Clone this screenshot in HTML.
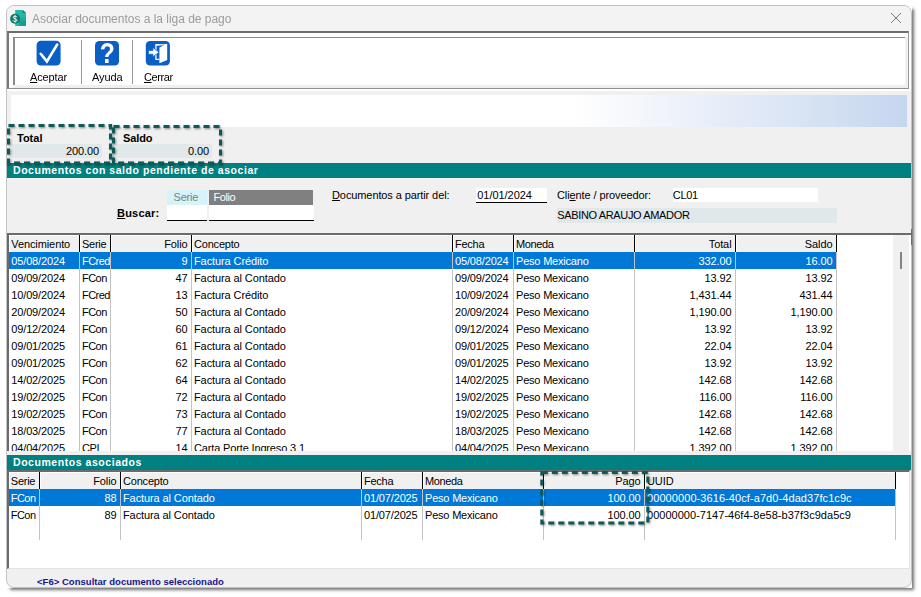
<!DOCTYPE html>
<html>
<head>
<meta charset="utf-8">
<style>
html,body{margin:0;padding:0;background:#fff;}
body{width:921px;height:597px;position:relative;overflow:hidden;font-family:"Liberation Sans",sans-serif;font-size:11px;color:#000;letter-spacing:-0.1px;}
div,span,svg{position:absolute;box-sizing:border-box;}
span{position:static;}
#sh{left:8px;top:7px;width:904px;height:581px;background:#fff;box-shadow:2px 2px 3px 0px rgba(0,0,0,.55);}
#shc{left:6px;top:5px;width:906px;height:583px;background:#fff;}
#win{left:6px;top:5px;width:906px;height:583px;background:#f0f0f0;border-radius:8px;border:1px solid #c2c2c2;}
.t{white-space:nowrap;line-height:14px;height:14px;}
.b{font-weight:bold;}
.c{height:17px;line-height:19px;white-space:nowrap;overflow:hidden;}
.c.r{text-align:right;padding-left:0;padding-right:3.5px;}
.w{color:#fff;}
.vs{width:2px;height:17px;background:#fff;border-left:1px solid #000;}
.hl{height:1px;background:#fff;}
.vl{width:1px;background:#c3c3c3;}
u{text-decoration:underline;text-underline-offset:1px;}
</style>
</head>
<body>
<div id="sh"></div><div id="shc"></div><div id="win"></div>

<div style="left:7px;top:6px;width:904px;height:25px;background:#f3f3f3;border-radius:7px 7px 0 0"></div>
<div class="t" style="left:32px;top:12px;font-size:12px;color:#9b9b9b;letter-spacing:-0.02px;will-change:transform">Asociar documentos a la liga de pago</div>
<svg style="left:10px;top:9px" width="18" height="18" viewBox="0 0 18 18">
<path d="M5.2 1 h7.6 l3.2 3 v12.1 q0 .8 -.8 .8 h-10 z" fill="#2bb5a8"/>
<path d="M12.8 1 l3.2 3 h-3.2 z" fill="#0e7d72"/>
<rect x="9" y="8.2" width="7" height="3.6" fill="#23a99c"/>
<rect x="9" y="11.8" width="7" height="5.1" fill="#1a9d91"/>
<circle cx="5.1" cy="9.8" r="5" fill="#0b7a6e"/>
<path d="M7 8.3 Q6.6 7.1 5.1 7.1 Q3.3 7.1 3.3 8.4 Q3.3 9.4 5.1 9.8 Q7 10.2 7 11.3 Q7 12.6 5.1 12.6 Q3.5 12.6 3.1 11.3" stroke="#fff" stroke-width="1" fill="none"/>
<path d="M5.1 6 V13.7" stroke="#fff" stroke-width=".8"/>
</svg>
<svg style="left:890px;top:12px" width="12" height="12" viewBox="0 0 12 12"><path d="M1 1 L11 11 M11 1 L1 11" stroke="#7a7a7a" stroke-width="1" fill="none"/></svg>
<div style="left:7px;top:31px;width:904px;height:60px;background:#fff"></div>
<div style="left:7px;top:31px;width:902px;height:58px;background:#fdfdfd;border-left:2px solid #787878;border-top:2px solid #6e6e6e;border-right:1px solid #999;border-bottom:1px solid #909090"></div>
<div style="left:905px;top:37px;width:3px;height:51px;background:#efefef"></div>
<div style="left:13px;top:85px;width:895px;height:3px;background:#efefef"></div>
<div style="left:13px;top:37px;width:892px;height:48px;background:#fff;border-left:2px solid #8c8c8c;border-top:1px solid #8c8c8c"></div>
<div style="left:81px;top:40px;width:1px;height:44px;background:#9a9a9a"></div>
<div style="left:132px;top:40px;width:1px;height:44px;background:#9a9a9a"></div>
<svg style="left:0;top:0" width="200" height="90" viewBox="0 0 200 90">
<rect x="36.6" y="40.7" width="24" height="24.9" rx="4.3" fill="#0a5ec4"/>
<path d="M40.7 53.8 L46.9 61.4 L57.2 44.5" stroke="#fff" stroke-width="2.6" fill="none" stroke-linecap="round" stroke-linejoin="miter"/>
<rect x="95" y="40.9" width="24" height="24.7" rx="4.3" fill="#0a5ec4"/>
<text transform="translate(107.3,63.2) scale(0.9,1.05)" x="0" y="0" font-family="Liberation Sans" font-weight="bold" font-size="27.5" fill="#fff" text-anchor="middle" letter-spacing="0">?</text>
<rect x="145.8" y="40.9" width="24.1" height="24.7" rx="4.3" fill="#0a5ec4"/>
<path d="M159.4 44.8 H155.9 V59.3 H159.4" stroke="#fff" stroke-width="1.25" fill="none"/>
<path d="M155.9 44.8 H167" stroke="#fff" stroke-width="1.25" fill="none"/>
<path d="M159.4 47.6 L167.2 43.8 V60 L159.4 63.3 Z" fill="#fff"/>
<path d="M148.4 50.6 H152.9 V47.7 L159.1 52.3 L152.9 56.7 V54.2 H148.4 Z" fill="#fff" stroke="#0a5ec4" stroke-width=".7"/>
</svg>
<div class="t" style="left:30px;top:70px;letter-spacing:-.12px"><u>A</u>ceptar</div>
<div class="t" style="left:92px;top:70px">Ayuda</div>
<div class="t" style="left:144px;top:70px;letter-spacing:-.4px"><u>C</u>errar</div>
<div style="left:10.5px;top:95px;width:896.5px;height:31.6px;background:linear-gradient(to right,#fff 0%,#fff 63%,#c6d6ef 100%)"></div>
<div style="left:10px;top:144px;width:92px;height:14px;background:#e1e8ea"></div>
<div style="left:112px;top:144px;width:100px;height:14px;background:#e1e8ea"></div>
<div class="t b" style="left:17px;top:131px;letter-spacing:0">Total</div>
<div class="t b" style="left:123px;top:131px;letter-spacing:-.1px">Saldo</div>
<div class="t" style="left:10px;width:89px;top:144px;text-align:right">200.00</div>
<div class="t" style="left:112px;width:97px;top:144px;text-align:right">0.00</div>
<div style="left:7px;top:163px;width:904px;height:15px;background:#008080"></div>
<div class="t b w" style="left:13px;top:162.8px;font-size:10.5px;letter-spacing:.55px">Documentos con saldo pendiente de asociar</div>
<div style="left:167px;top:190px;width:40px;height:15px;background:#d5f3f8"></div>
<div class="t" style="left:173.5px;top:189.5px;letter-spacing:-.2px;color:#7f7f7f">Serie</div>
<div style="left:209px;top:190px;width:104px;height:15px;background:#808080"></div>
<div class="t w" style="left:213.5px;top:189.5px;letter-spacing:-.4px">Folio</div>
<div style="left:167px;top:205px;width:40px;height:16px;background:#fff;border-bottom:1px solid #000"></div>
<div style="left:209px;top:205px;width:105px;height:16px;background:#fff;border-bottom:1px solid #000"></div>
<div class="t b" style="left:117px;top:206px;letter-spacing:.2px"><u>B</u>uscar:</div>
<div class="t" style="left:332px;top:187.5px"><u>D</u>ocumentos a partir del:</div>
<div style="left:476px;top:188px;width:71px;height:15px;background:#fff;border-bottom:1px solid #000"></div>
<div class="t" style="left:477.3px;top:187.5px;letter-spacing:-.05px">01/01/2024</div>
<div class="t" style="left:557px;top:187.5px">Cli<u>e</u>nte / proveedor:</div>
<div style="left:673px;top:188px;width:145px;height:14px;background:#fff"></div>
<div class="t" style="left:672.8px;top:187.5px;letter-spacing:-.3px">CL01</div>
<div style="left:557px;top:208px;width:280px;height:15px;background:#e1e8ea"></div>
<div class="t" style="left:557.3px;top:207.5px;letter-spacing:-.36px">SABINO ARAUJO AMADOR</div>
<div style="left:7px;top:233px;width:904px;height:218px;background:#fff;border-left:2px solid #6b6b6b;border-top:2px solid #6b6b6b"></div>
<div style="left:9px;top:235px;width:828px;height:17px;background:#f0f0f0;border-top:1px solid #fff;border-left:1px solid #fff"></div>
<div style="left:893px;top:235px;width:16px;height:216px;background:#f0f0f0"></div>
<div style="left:911px;top:229px;width:1px;height:16px;background:#2a8a88"></div>
<div style="left:900px;top:252px;width:2px;height:17px;background:#858585"></div>
<div style="left:9px;top:252px;width:827px;height:17px;background:#0078d7"></div>
<div style="left:0;top:235px;width:921px;height:216px;overflow:hidden">
<div class="c" style="left:9px;top:0px;width:70px;padding-left:2.3px;">Vencimiento</div>
<div class="c" style="left:81px;top:0px;width:29px;padding-left:1px;letter-spacing:-0.25px;">Serie</div>
<div class="c r" style="left:112px;top:0px;width:79px;">Folio</div>
<div class="c" style="left:193px;top:0px;width:259px;padding-left:1px;letter-spacing:-0.2px;">Concepto</div>
<div class="c" style="left:454px;top:0px;width:59px;padding-left:1px;letter-spacing:-0.25px;">Fecha</div>
<div class="c" style="left:515px;top:0px;width:119px;padding-left:1px;letter-spacing:-0.4px;">Moneda</div>
<div class="c r" style="left:636px;top:0px;width:99px;">Total</div>
<div class="c r" style="left:737px;top:0px;width:99px;">Saldo</div>
<div class="c" style="left:9px;top:17px;width:70px;color:#fff;padding-left:2.3px;letter-spacing:-0.15px;">05/08/2024</div>
<div class="c" style="left:81px;top:17px;width:29px;color:#fff;padding-left:1px;letter-spacing:-0.55px;">FCred</div>
<div class="c r" style="left:112px;top:17px;width:79px;color:#fff;">9</div>
<div class="c" style="left:193px;top:17px;width:259px;color:#fff;padding-left:1px;">Factura Crédito</div>
<div class="c" style="left:454px;top:17px;width:59px;color:#fff;padding-left:1px;letter-spacing:-0.15px;">05/08/2024</div>
<div class="c" style="left:515px;top:17px;width:119px;color:#fff;padding-left:1px;letter-spacing:-0.2px;">Peso Mexicano</div>
<div class="c r" style="left:636px;top:17px;width:99px;color:#fff;">332.00</div>
<div class="c r" style="left:737px;top:17px;width:99px;color:#fff;">16.00</div>
<div class="c" style="left:9px;top:34px;width:70px;padding-left:2.3px;letter-spacing:-0.15px;">09/09/2024</div>
<div class="c" style="left:81px;top:34px;width:29px;padding-left:1px;letter-spacing:-0.55px;">FCon</div>
<div class="c r" style="left:112px;top:34px;width:79px;">47</div>
<div class="c" style="left:193px;top:34px;width:259px;padding-left:1px;">Factura al Contado</div>
<div class="c" style="left:454px;top:34px;width:59px;padding-left:1px;letter-spacing:-0.15px;">09/09/2024</div>
<div class="c" style="left:515px;top:34px;width:119px;padding-left:1px;letter-spacing:-0.2px;">Peso Mexicano</div>
<div class="c r" style="left:636px;top:34px;width:99px;">13.92</div>
<div class="c r" style="left:737px;top:34px;width:99px;">13.92</div>
<div class="c" style="left:9px;top:51px;width:70px;padding-left:2.3px;letter-spacing:-0.15px;">10/09/2024</div>
<div class="c" style="left:81px;top:51px;width:29px;padding-left:1px;letter-spacing:-0.55px;">FCred</div>
<div class="c r" style="left:112px;top:51px;width:79px;">13</div>
<div class="c" style="left:193px;top:51px;width:259px;padding-left:1px;">Factura Crédito</div>
<div class="c" style="left:454px;top:51px;width:59px;padding-left:1px;letter-spacing:-0.15px;">10/09/2024</div>
<div class="c" style="left:515px;top:51px;width:119px;padding-left:1px;letter-spacing:-0.2px;">Peso Mexicano</div>
<div class="c r" style="left:636px;top:51px;width:99px;">1,431.44</div>
<div class="c r" style="left:737px;top:51px;width:99px;">431.44</div>
<div class="c" style="left:9px;top:68px;width:70px;padding-left:2.3px;letter-spacing:-0.15px;">20/09/2024</div>
<div class="c" style="left:81px;top:68px;width:29px;padding-left:1px;letter-spacing:-0.55px;">FCon</div>
<div class="c r" style="left:112px;top:68px;width:79px;">50</div>
<div class="c" style="left:193px;top:68px;width:259px;padding-left:1px;">Factura al Contado</div>
<div class="c" style="left:454px;top:68px;width:59px;padding-left:1px;letter-spacing:-0.15px;">20/09/2024</div>
<div class="c" style="left:515px;top:68px;width:119px;padding-left:1px;letter-spacing:-0.2px;">Peso Mexicano</div>
<div class="c r" style="left:636px;top:68px;width:99px;">1,190.00</div>
<div class="c r" style="left:737px;top:68px;width:99px;">1,190.00</div>
<div class="c" style="left:9px;top:85px;width:70px;padding-left:2.3px;letter-spacing:-0.15px;">09/12/2024</div>
<div class="c" style="left:81px;top:85px;width:29px;padding-left:1px;letter-spacing:-0.55px;">FCon</div>
<div class="c r" style="left:112px;top:85px;width:79px;">60</div>
<div class="c" style="left:193px;top:85px;width:259px;padding-left:1px;">Factura al Contado</div>
<div class="c" style="left:454px;top:85px;width:59px;padding-left:1px;letter-spacing:-0.15px;">09/12/2024</div>
<div class="c" style="left:515px;top:85px;width:119px;padding-left:1px;letter-spacing:-0.2px;">Peso Mexicano</div>
<div class="c r" style="left:636px;top:85px;width:99px;">13.92</div>
<div class="c r" style="left:737px;top:85px;width:99px;">13.92</div>
<div class="c" style="left:9px;top:102px;width:70px;padding-left:2.3px;letter-spacing:-0.15px;">09/01/2025</div>
<div class="c" style="left:81px;top:102px;width:29px;padding-left:1px;letter-spacing:-0.55px;">FCon</div>
<div class="c r" style="left:112px;top:102px;width:79px;">61</div>
<div class="c" style="left:193px;top:102px;width:259px;padding-left:1px;">Factura al Contado</div>
<div class="c" style="left:454px;top:102px;width:59px;padding-left:1px;letter-spacing:-0.15px;">09/01/2025</div>
<div class="c" style="left:515px;top:102px;width:119px;padding-left:1px;letter-spacing:-0.2px;">Peso Mexicano</div>
<div class="c r" style="left:636px;top:102px;width:99px;">22.04</div>
<div class="c r" style="left:737px;top:102px;width:99px;">22.04</div>
<div class="c" style="left:9px;top:119px;width:70px;padding-left:2.3px;letter-spacing:-0.15px;">09/01/2025</div>
<div class="c" style="left:81px;top:119px;width:29px;padding-left:1px;letter-spacing:-0.55px;">FCon</div>
<div class="c r" style="left:112px;top:119px;width:79px;">62</div>
<div class="c" style="left:193px;top:119px;width:259px;padding-left:1px;">Factura al Contado</div>
<div class="c" style="left:454px;top:119px;width:59px;padding-left:1px;letter-spacing:-0.15px;">09/01/2025</div>
<div class="c" style="left:515px;top:119px;width:119px;padding-left:1px;letter-spacing:-0.2px;">Peso Mexicano</div>
<div class="c r" style="left:636px;top:119px;width:99px;">13.92</div>
<div class="c r" style="left:737px;top:119px;width:99px;">13.92</div>
<div class="c" style="left:9px;top:136px;width:70px;padding-left:2.3px;letter-spacing:-0.15px;">14/02/2025</div>
<div class="c" style="left:81px;top:136px;width:29px;padding-left:1px;letter-spacing:-0.55px;">FCon</div>
<div class="c r" style="left:112px;top:136px;width:79px;">64</div>
<div class="c" style="left:193px;top:136px;width:259px;padding-left:1px;">Factura al Contado</div>
<div class="c" style="left:454px;top:136px;width:59px;padding-left:1px;letter-spacing:-0.15px;">14/02/2025</div>
<div class="c" style="left:515px;top:136px;width:119px;padding-left:1px;letter-spacing:-0.2px;">Peso Mexicano</div>
<div class="c r" style="left:636px;top:136px;width:99px;">142.68</div>
<div class="c r" style="left:737px;top:136px;width:99px;">142.68</div>
<div class="c" style="left:9px;top:153px;width:70px;padding-left:2.3px;letter-spacing:-0.15px;">19/02/2025</div>
<div class="c" style="left:81px;top:153px;width:29px;padding-left:1px;letter-spacing:-0.55px;">FCon</div>
<div class="c r" style="left:112px;top:153px;width:79px;">72</div>
<div class="c" style="left:193px;top:153px;width:259px;padding-left:1px;">Factura al Contado</div>
<div class="c" style="left:454px;top:153px;width:59px;padding-left:1px;letter-spacing:-0.15px;">19/02/2025</div>
<div class="c" style="left:515px;top:153px;width:119px;padding-left:1px;letter-spacing:-0.2px;">Peso Mexicano</div>
<div class="c r" style="left:636px;top:153px;width:99px;">116.00</div>
<div class="c r" style="left:737px;top:153px;width:99px;">116.00</div>
<div class="c" style="left:9px;top:170px;width:70px;padding-left:2.3px;letter-spacing:-0.15px;">19/02/2025</div>
<div class="c" style="left:81px;top:170px;width:29px;padding-left:1px;letter-spacing:-0.55px;">FCon</div>
<div class="c r" style="left:112px;top:170px;width:79px;">73</div>
<div class="c" style="left:193px;top:170px;width:259px;padding-left:1px;">Factura al Contado</div>
<div class="c" style="left:454px;top:170px;width:59px;padding-left:1px;letter-spacing:-0.15px;">19/02/2025</div>
<div class="c" style="left:515px;top:170px;width:119px;padding-left:1px;letter-spacing:-0.2px;">Peso Mexicano</div>
<div class="c r" style="left:636px;top:170px;width:99px;">142.68</div>
<div class="c r" style="left:737px;top:170px;width:99px;">142.68</div>
<div class="c" style="left:9px;top:187px;width:70px;padding-left:2.3px;letter-spacing:-0.15px;">18/03/2025</div>
<div class="c" style="left:81px;top:187px;width:29px;padding-left:1px;letter-spacing:-0.55px;">FCon</div>
<div class="c r" style="left:112px;top:187px;width:79px;">77</div>
<div class="c" style="left:193px;top:187px;width:259px;padding-left:1px;">Factura al Contado</div>
<div class="c" style="left:454px;top:187px;width:59px;padding-left:1px;letter-spacing:-0.15px;">18/03/2025</div>
<div class="c" style="left:515px;top:187px;width:119px;padding-left:1px;letter-spacing:-0.2px;">Peso Mexicano</div>
<div class="c r" style="left:636px;top:187px;width:99px;">142.68</div>
<div class="c r" style="left:737px;top:187px;width:99px;">142.68</div>
<div class="c" style="left:9px;top:204px;width:70px;padding-left:2.3px;letter-spacing:-0.15px;">04/04/2025</div>
<div class="c" style="left:81px;top:204px;width:29px;padding-left:1px;letter-spacing:-0.4px;">CPI</div>
<div class="c r" style="left:112px;top:204px;width:79px;">14</div>
<div class="c" style="left:193px;top:204px;width:259px;padding-left:1px;letter-spacing:-0.15px;">Carta Porte Ingreso 3.1</div>
<div class="c" style="left:454px;top:204px;width:59px;padding-left:1px;letter-spacing:-0.15px;">04/04/2025</div>
<div class="c" style="left:515px;top:204px;width:119px;padding-left:1px;letter-spacing:-0.2px;">Peso Mexicano</div>
<div class="c r" style="left:636px;top:204px;width:99px;">1,392.00</div>
<div class="c r" style="left:737px;top:204px;width:99px;">1,392.00</div>
<div class="vs" style="left:79px;top:0"></div>
<div class="vl" style="left:79px;top:17px;height:210px"></div>
<div class="vs" style="left:110px;top:0"></div>
<div class="vl" style="left:110px;top:17px;height:210px"></div>
<div class="vs" style="left:191px;top:0"></div>
<div class="vl" style="left:191px;top:17px;height:210px"></div>
<div class="vs" style="left:452px;top:0"></div>
<div class="vl" style="left:452px;top:17px;height:210px"></div>
<div class="vs" style="left:513px;top:0"></div>
<div class="vl" style="left:513px;top:17px;height:210px"></div>
<div class="vs" style="left:634px;top:0"></div>
<div class="vl" style="left:634px;top:17px;height:210px"></div>
<div class="vs" style="left:735px;top:0"></div>
<div class="vl" style="left:735px;top:17px;height:210px"></div>
<div class="vs" style="left:836px;top:0"></div>
<div class="vl" style="left:836px;top:17px;height:210px"></div>
</div>
<div style="left:7px;top:455px;width:904px;height:15px;background:#008080"></div>
<div class="t b w" style="left:13px;top:454.6px;font-size:10.5px;letter-spacing:.55px">Documentos asociados</div>
<div style="left:7px;top:470px;width:903px;height:99px;background:#fff;border-left:2px solid #6b6b6b;border-top:2px solid #6b6b6b;border-right:1px solid #e3e3e3;border-bottom:1px solid #e3e3e3"></div>
<div style="left:9px;top:472px;width:887px;height:17px;background:#f0f0f0;border-top:1px solid #fff;border-left:1px solid #fff"></div>
<div style="left:9px;top:489px;width:886px;height:17px;background:#0078d7"></div>
<div class="c" style="left:9px;top:472px;width:30px;padding-left:1.8px;letter-spacing:-0.25px;">Serie</div>
<div class="c r" style="left:41px;top:472px;width:79px;">Folio</div>
<div class="c" style="left:122px;top:472px;width:239px;padding-left:1px;letter-spacing:-0.2px;">Concepto</div>
<div class="c" style="left:363px;top:472px;width:59px;padding-left:1px;letter-spacing:-0.25px;">Fecha</div>
<div class="c" style="left:424px;top:472px;width:119px;padding-left:1px;letter-spacing:-0.4px;">Moneda</div>
<div class="c r" style="left:545px;top:472px;width:99px;">Pago</div>
<div class="c" style="left:646px;top:472px;width:249px;padding-left:1px;letter-spacing:-0.1px;">UUID</div>
<div class="c" style="left:9px;top:489px;width:30px;color:#fff;padding-left:1.8px;letter-spacing:-0.55px;">FCon</div>
<div class="c r" style="left:41px;top:489px;width:79px;color:#fff;">88</div>
<div class="c" style="left:122px;top:489px;width:239px;color:#fff;padding-left:1px;">Factura al Contado</div>
<div class="c" style="left:363px;top:489px;width:59px;color:#fff;padding-left:1px;letter-spacing:-0.15px;">01/07/2025</div>
<div class="c" style="left:424px;top:489px;width:119px;color:#fff;padding-left:1px;letter-spacing:-0.2px;">Peso Mexicano</div>
<div class="c r" style="left:545px;top:489px;width:99px;color:#fff;">100.00</div>
<div class="c" style="left:646px;top:489px;width:249px;color:#fff;padding-left:1px;letter-spacing:0.08px;">00000000-3616-40cf-a7d0-4dad37fc1c9c</div>
<div class="c" style="left:9px;top:506px;width:30px;padding-left:1.8px;letter-spacing:-0.55px;">FCon</div>
<div class="c r" style="left:41px;top:506px;width:79px;">89</div>
<div class="c" style="left:122px;top:506px;width:239px;padding-left:1px;">Factura al Contado</div>
<div class="c" style="left:363px;top:506px;width:59px;padding-left:1px;letter-spacing:-0.15px;">01/07/2025</div>
<div class="c" style="left:424px;top:506px;width:119px;padding-left:1px;letter-spacing:-0.2px;">Peso Mexicano</div>
<div class="c r" style="left:545px;top:506px;width:99px;">100.00</div>
<div class="c" style="left:646px;top:506px;width:249px;padding-left:1px;letter-spacing:0.025px;">00000000-7147-46f4-8e58-b37f3c9da5c9</div>
<div class="vs" style="left:39px;top:472px"></div>
<div class="vl" style="left:39px;top:489px;height:51px"></div>
<div class="vs" style="left:120px;top:472px"></div>
<div class="vl" style="left:120px;top:489px;height:51px"></div>
<div class="vs" style="left:361px;top:472px"></div>
<div class="vl" style="left:361px;top:489px;height:51px"></div>
<div class="vs" style="left:422px;top:472px"></div>
<div class="vl" style="left:422px;top:489px;height:51px"></div>
<div class="vs" style="left:543px;top:472px"></div>
<div class="vl" style="left:543px;top:489px;height:51px"></div>
<div class="vs" style="left:644px;top:472px"></div>
<div class="vl" style="left:644px;top:489px;height:51px"></div>
<div class="vs" style="left:895px;top:472px"></div>
<div class="vl" style="left:895px;top:489px;height:51px"></div>
<div class="t b" style="left:37px;top:575px;font-size:9.5px;color:#15158c;letter-spacing:0.03px">&lt;F6&gt; Consultar documento seleccionado</div>
<svg style="left:0;top:0;filter:drop-shadow(1.5px 1.5px 1.2px rgba(0,0,0,.45))" width="921" height="597" viewBox="0 0 921 597">
<g fill="none" stroke="#0e5b55" stroke-width="3" stroke-dasharray="6 4">
<rect x="8.5" y="125.5" width="102" height="37.5"/>
<rect x="113.5" y="126.5" width="107" height="36.5"/>
<rect x="541.8" y="472.5" width="106" height="50.5"/>
</g></svg>
</body>
</html>
